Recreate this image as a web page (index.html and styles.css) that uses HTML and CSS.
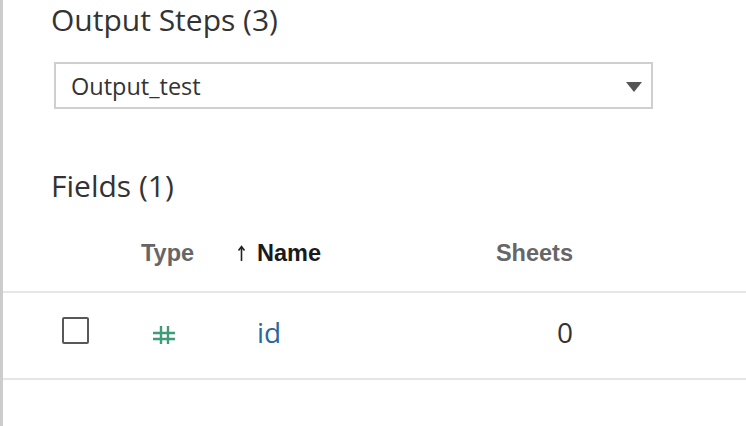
FILE: index.html
```html
<!DOCTYPE html>
<html>
<head>
<meta charset="utf-8">
<link rel="stylesheet" href="styles.css">
</head>
<body>
<div class="panel">
  <h1 class="title">Output Steps (3)</h1>
  <div class="select">
    <span class="select-text">Output_test</span>
    <svg class="caret" width="16" height="10" viewBox="0 0 16 10"><path d="M0 0 H16 L8 10 Z" fill="#555"/></svg>
  </div>
  <h2 class="title fields-title">Fields (1)</h2>
  <div class="grid head">
    <div></div>
    <div class="col-type">Type</div>
    <div class="col-name"><svg class="sort" width="21" height="17" viewBox="0 0 21 17"><path d="M5.5 16 V2 M2.5 5.5 L5.5 1.5 L8.5 5.5" stroke="#222" stroke-width="1.6" fill="none"/></svg><span>Name</span></div>
    <div class="col-sheets">Sheets</div>
    <div></div>
  </div>
  <div class="grid row">
    <div class="cell-check"><span class="checkbox"></span></div>
    <div class="cell-type"><svg class="num-icon" width="22" height="18" viewBox="0 0 22 18"><path d="M8 0 V18 M15 0 V18 M0 7 H22 M0 13 H22" stroke="#3f9b78" stroke-width="2.4" fill="none"/></svg></div>
    <div class="cell-name">id</div>
    <div class="cell-sheets">0</div>
    <div></div>
  </div>
</div>
</body>
</html>
```
FILE: styles.css
```css
html, body {
  margin: 0;
  padding: 0;
  background: #fff;
}
body {
  font-family: "Open Sans", "Liberation Sans", sans-serif;
  color: #333;
}
.panel {
  border-left: 3px solid #cccccc;
  height: 426px;
  box-sizing: border-box;
}
.title {
  margin: 0 0 0 48px;
  font-size: 30px;
  font-weight: 400;
  line-height: 40px;
  color: #333;
}
.select {
  margin: 22px 0 0 51px;
  width: 599px;
  height: 47px;
  box-sizing: border-box;
  border: 2px solid #cfcfcf;
  display: flex;
  align-items: center;
  justify-content: space-between;
  padding: 0 9px 0 15px;
}
.select-text {
  font-size: 23.5px;
  color: #333;
}
.caret {
  display: block;
  margin-top: 2px;
}
.fields-title {
  margin-top: 57px;
}
.grid {
  display: grid;
  grid-template-columns: 138px 95px 1fr 100px 173px;
  align-items: center;
}
.head {
  margin-top: 27px;
  height: 40px;
  margin-bottom: 18px;
  font-family: "Liberation Sans", Arial, sans-serif;
  font-size: 23.5px;
  font-weight: 700;
  color: #666;
}
.col-name {
  display: flex;
  align-items: center;
  color: #1a1a1a;
}
.sort {
  display: block;
}
.col-sheets {
  text-align: right;
}
.row {
  height: 89px;
  box-sizing: border-box;
  border-top: 2px solid #e6e6e6;
  border-bottom: 2px solid #e6e6e6;
  padding-bottom: 7px;
}
.cell-check {
  padding-left: 59px;
}
.checkbox {
  display: block;
  width: 27px;
  height: 27px;
  box-sizing: border-box;
  border: 2.5px solid #585858;
  border-radius: 2px;
  margin-top: -4px;
}
.cell-type {
  padding-left: 12px;
}
.num-icon {
  display: block;
  margin-top: 6px;
}
.cell-name {
  padding-left: 21px;
  font-size: 28px;
  color: #2c679b;
}
.cell-sheets {
  text-align: right;
  font-size: 28px;
  color: #333;
}
```
